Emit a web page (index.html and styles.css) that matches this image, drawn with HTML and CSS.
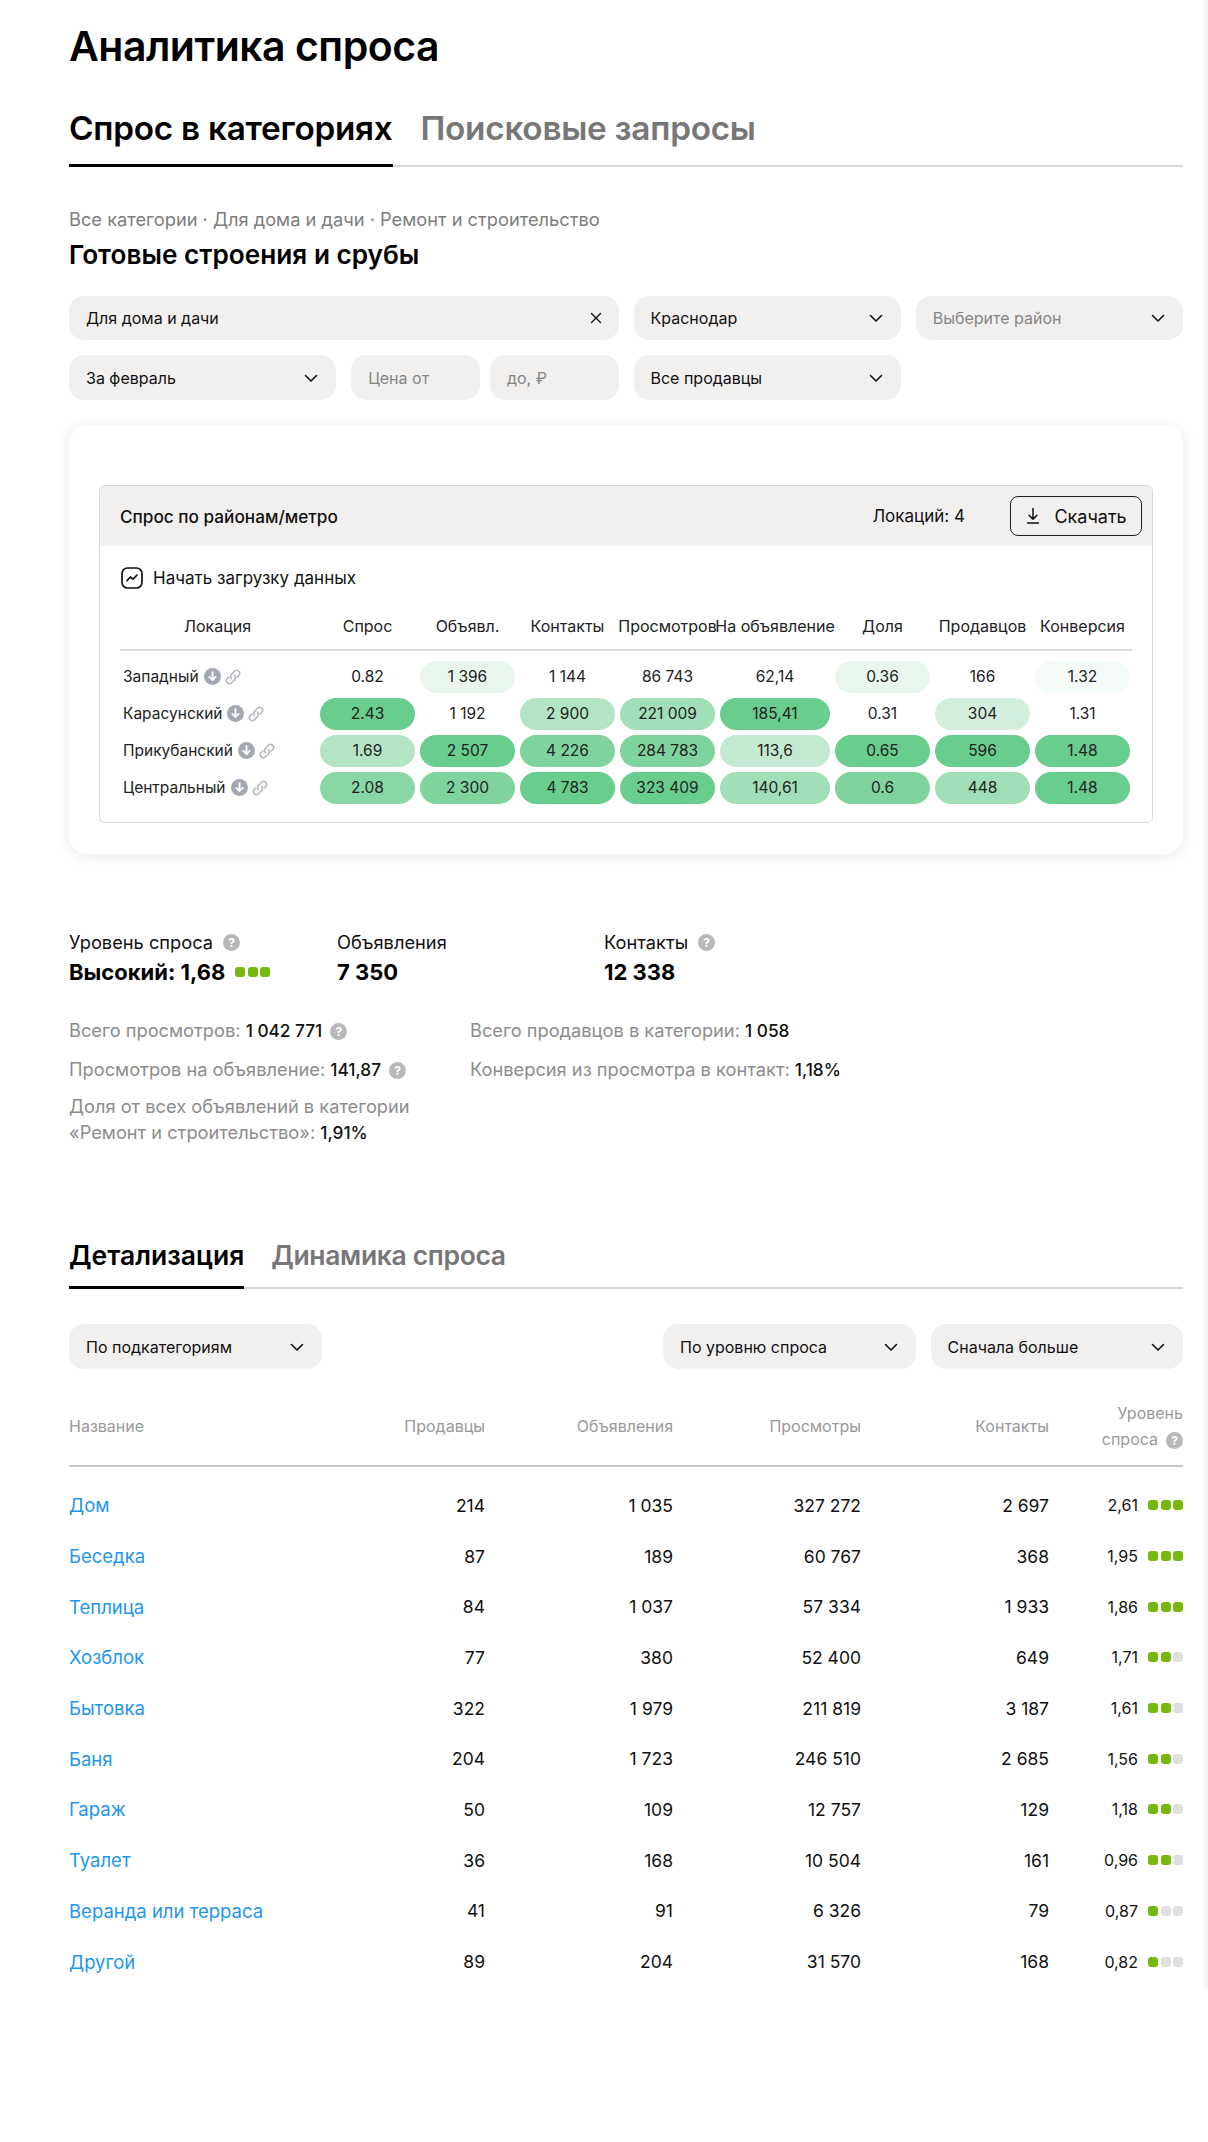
FILE: index.html
```html
<!DOCTYPE html>
<html lang="ru">
<head>
<meta charset="utf-8">
<title>Аналитика спроса</title>
<link rel="stylesheet" href="styles.css">
</head>
<body>
<svg class="defs" width="0" height="0" aria-hidden="true">
  <symbol id="chev" viewBox="0 0 16 16"><path d="M2.5 5.5 8 11l5.5-5.5" fill="none" stroke="currentColor" stroke-width="1.6" stroke-linecap="round" stroke-linejoin="round"/></symbol>
  <symbol id="down" viewBox="0 0 16 16"><circle cx="8" cy="8" r="8" fill="#a3a8b3"/><path d="M8 3.8v7.4M5 8.4l3 3 3-3" fill="none" stroke="#fff" stroke-width="1.7" stroke-linecap="round" stroke-linejoin="round"/></symbol>
  <symbol id="link" viewBox="1 1 14 14"><g fill="none" stroke="#b4b7be" stroke-width="1.4" stroke-linecap="round"><path d="M6.6 9.4a2.6 2.6 0 0 1 0-3.7l2.7-2.7a2.6 2.6 0 0 1 3.7 3.7l-1.3 1.3"/><path d="M9.4 6.6a2.6 2.6 0 0 1 0 3.7L6.7 13A2.6 2.6 0 0 1 3 9.3l1.3-1.3"/></g></symbol>
</svg>
<div class="page">
  <h1 class="title">Аналитика спроса</h1>
  <nav class="tabs tabs-main">
    <span class="tab tab-active">Спрос в категориях</span>
    <span class="tab">Поисковые запросы</span>
  </nav>
  <p class="crumbs">Все категории · Для дома и дачи · Ремонт и строительство</p>
  <h2 class="subtitle">Готовые строения и срубы</h2>

  <div class="filters">
    <div class="field span2"><span>Для дома и дачи</span>
      <svg class="ico-x" viewBox="0 0 12 12"><path d="M1.5 1.5l9 9M10.5 1.5l-9 9" fill="none" stroke="#111" stroke-width="1.4" stroke-linecap="round"/></svg></div>
    <div class="field"><span>Краснодар</span><svg class="chev"><use href="#chev"/></svg></div>
    <div class="field"><span class="muted">Выберите район</span><svg class="chev"><use href="#chev"/></svg></div>
    <div class="field tall"><span>За февраль</span><svg class="chev"><use href="#chev"/></svg></div>
    <div class="price-pair">
      <div class="field tall"><span class="muted">Цена от</span></div>
      <div class="field tall"><span class="muted">до, ₽</span></div>
    </div>
    <div class="field tall"><span>Все продавцы</span><svg class="chev"><use href="#chev"/></svg></div>
  </div>

  <section class="card">
    <div class="box">
      <header class="box-head">
        <span class="box-title">Спрос по районам/метро</span>
        <span class="box-count">Локаций: 4</span>
        <button class="download" type="button">
          <svg class="ico-dl" viewBox="0 0 16 18"><path d="M8 1.5v10.5M4.2 8.4 8 12.2l3.8-3.8M2.5 16h11" fill="none" stroke="#111" stroke-width="1.5" stroke-linecap="round" stroke-linejoin="round"/></svg>
          Скачать
        </button>
      </header>
      <div class="box-body">
        <div class="start">
          <svg class="ico-chart" viewBox="0 0 22 22"><rect x="1" y="1" width="20" height="20" rx="5.5" fill="none" stroke="#111" stroke-width="1.7"/><path d="M6 13.6 9.4 10l2.7 2.2L16 8" fill="none" stroke="#111" stroke-width="1.7" stroke-linecap="round" stroke-linejoin="round"/></svg>
          <span>Начать загрузку данных</span>
        </div>
        <div class="hm-row hm-head">
          <div class="hm-h">Локация</div><div class="hm-h">Спрос</div><div class="hm-h">Объявл.</div><div class="hm-h">Контакты</div><div class="hm-h">Просмотров</div><div class="hm-h">На объявление</div><div class="hm-h">Доля</div><div class="hm-h">Продавцов</div><div class="hm-h">Конверсия</div>
        </div>
        <div class="hm-row">
          <div class="hm-loc">Западный<svg class="ico-d"><use href="#down"/></svg><svg class="ico-l"><use href="#link"/></svg></div>
          <div class="pill">0.82</div><div class="pill h2">1 396</div><div class="pill">1 144</div><div class="pill">86 743</div><div class="pill">62,14</div><div class="pill h2">0.36</div><div class="pill">166</div><div class="pill h1">1.32</div>
        </div>
        <div class="hm-row">
          <div class="hm-loc">Карасунский<svg class="ico-d"><use href="#down"/></svg><svg class="ico-l"><use href="#link"/></svg></div>
          <div class="pill h9">2.43</div><div class="pill">1 192</div><div class="pill h5">2 900</div><div class="pill h6">221 009</div><div class="pill h9">185,41</div><div class="pill">0.31</div><div class="pill h3">304</div><div class="pill">1.31</div>
        </div>
        <div class="hm-row">
          <div class="hm-loc">Прикубанский<svg class="ico-d"><use href="#down"/></svg><svg class="ico-l"><use href="#link"/></svg></div>
          <div class="pill h5">1.69</div><div class="pill h9">2 507</div><div class="pill h8">4 226</div><div class="pill h8">284 783</div><div class="pill h4">113,6</div><div class="pill h9">0.65</div><div class="pill h9">596</div><div class="pill h9">1.48</div>
        </div>
        <div class="hm-row">
          <div class="hm-loc">Центральный<svg class="ico-d"><use href="#down"/></svg><svg class="ico-l"><use href="#link"/></svg></div>
          <div class="pill h7">2.08</div><div class="pill h8">2 300</div><div class="pill h9">4 783</div><div class="pill h9">323 409</div><div class="pill h6">140,61</div><div class="pill h8">0.6</div><div class="pill h6">448</div><div class="pill h9">1.48</div>
        </div>
      </div>
    </div>
  </section>

  <section class="stats">
    <div class="stat">
      <div class="stat-label">Уровень спроса<span class="help">?</span></div>
      <div class="stat-value">Высокий: 1,68<span class="dots"><i class="on"></i><i class="on"></i><i class="on"></i></span></div>
    </div>
    <div class="stat">
      <div class="stat-label">Объявления</div>
      <div class="stat-value">7 350</div>
    </div>
    <div class="stat">
      <div class="stat-label">Контакты<span class="help">?</span></div>
      <div class="stat-value">12 338</div>
    </div>
  </section>

  <section class="facts">
    <div class="facts-col">
      <p class="fact">Всего просмотров: <b>1 042 771</b><span class="help">?</span></p>
      <p class="fact">Просмотров на объявление: <b>141,87</b><span class="help">?</span></p>
      <p class="fact fact-wrap">Доля от всех объявлений в категории<br>«Ремонт и строительство»: <b>1,91%</b></p>
    </div>
    <div class="facts-col">
      <p class="fact">Всего продавцов в категории: <b>1 058</b></p>
      <p class="fact">Конверсия из просмотра в контакт: <b>1,18%</b></p>
    </div>
  </section>

  <nav class="tabs tabs-sub">
    <span class="tab tab-active">Детализация</span>
    <span class="tab tab-tight">Динамика спроса</span>
  </nav>

  <div class="filters2">
    <div class="field tall w1"><span>По подкатегориям</span><svg class="chev"><use href="#chev"/></svg></div>
    <div class="field tall w2"><span>По уровню спроса</span><svg class="chev"><use href="#chev"/></svg></div>
    <div class="field tall w2"><span>Сначала больше</span><svg class="chev"><use href="#chev"/></svg></div>
  </div>

  <div class="dt-row dt-head">
    <div class="name">Название</div><div>Продавцы</div><div>Объявления</div><div>Просмотры</div><div>Контакты</div>
    <div class="lvl-h">Уровень<br>спроса<span class="help">?</span></div>
  </div>
  <div class="dt-row"><a class="name" href="#">Дом</a><div>214</div><div>1 035</div><div>327 272</div><div>2 697</div><div class="lvl">2,61<span class="dots"><i class="on"></i><i class="on"></i><i class="on"></i></span></div></div>
  <div class="dt-row"><a class="name" href="#">Беседка</a><div>87</div><div>189</div><div>60 767</div><div>368</div><div class="lvl">1,95<span class="dots"><i class="on"></i><i class="on"></i><i class="on"></i></span></div></div>
  <div class="dt-row"><a class="name" href="#">Теплица</a><div>84</div><div>1 037</div><div>57 334</div><div>1 933</div><div class="lvl">1,86<span class="dots"><i class="on"></i><i class="on"></i><i class="on"></i></span></div></div>
  <div class="dt-row"><a class="name" href="#">Хозблок</a><div>77</div><div>380</div><div>52 400</div><div>649</div><div class="lvl">1,71<span class="dots"><i class="on"></i><i class="on"></i><i></i></span></div></div>
  <div class="dt-row"><a class="name" href="#">Бытовка</a><div>322</div><div>1 979</div><div>211 819</div><div>3 187</div><div class="lvl">1,61<span class="dots"><i class="on"></i><i class="on"></i><i></i></span></div></div>
  <div class="dt-row"><a class="name" href="#">Баня</a><div>204</div><div>1 723</div><div>246 510</div><div>2 685</div><div class="lvl">1,56<span class="dots"><i class="on"></i><i class="on"></i><i></i></span></div></div>
  <div class="dt-row"><a class="name" href="#">Гараж</a><div>50</div><div>109</div><div>12 757</div><div>129</div><div class="lvl">1,18<span class="dots"><i class="on"></i><i class="on"></i><i></i></span></div></div>
  <div class="dt-row"><a class="name" href="#">Туалет</a><div>36</div><div>168</div><div>10 504</div><div>161</div><div class="lvl">0,96<span class="dots"><i class="on"></i><i class="on"></i><i></i></span></div></div>
  <div class="dt-row"><a class="name" href="#">Веранда или терраса</a><div>41</div><div>91</div><div>6 326</div><div>79</div><div class="lvl">0,87<span class="dots"><i class="on"></i><i></i><i></i></span></div></div>
  <div class="dt-row"><a class="name" href="#">Другой</a><div>89</div><div>204</div><div>31 570</div><div>168</div><div class="lvl">0,82<span class="dots"><i class="on"></i><i></i><i></i></span></div></div>
</div>
</body>
</html>
```
FILE: styles.css
```css
* { box-sizing: border-box; }
html, body { margin: 0; background: #fff; }
body { font-family: Inter, "Noto Sans", sans-serif; color: #111; }
.defs { position: absolute; }
.page { position: relative; width: 1208px; height: 1989px; padding: 22px 25px 0 69px; }
.page::after { content: ""; position: absolute; top: 0; right: 0; bottom: 0; width: 6px; background: linear-gradient(90deg, #fff, #f4f4f4); }

.title { margin: 0; font-size: 41px; line-height: 48px; font-weight: 600; color: #000; letter-spacing: -0.5px; }
.tabs { display: flex; border-bottom: 2px solid #d8d8d8; }
.tab { font-weight: 600; color: #777; position: relative; }
.tab-active { color: #000; }
.tab-active::after { content: ""; position: absolute; left: 0; right: 0; bottom: -2px; height: 3px; background: #000; }
.tabs-main { margin-top: 30px; height: 67px; gap: 28px; font-size: 33.3px; line-height: 40px; }
.tabs-main .tab { padding-top: 8px; letter-spacing: -0.25px; }
.crumbs { margin: 40px 0 0; font-size: 18.25px; line-height: 24px; color: #7d7d7d; }
.subtitle { margin: 9px 0 0; font-size: 26.2px; line-height: 30px; font-weight: 600; color: #000; }

.filters { margin-top: 26px; display: grid; grid-template-columns: repeat(4, 1fr); gap: 15px; }
.span2 { grid-column: span 2; }
.price-pair { display: flex; gap: 10px; }
.price-pair .field { flex: 1; }
.field { height: 44px; border-radius: 15px; background: #f1f0ef; padding: 0 17px; display: flex; align-items: center; justify-content: space-between; font-size: 16px; color: #111; }
.tall { height: 45px; }
.muted { color: #858585; }
.chev { width: 16px; height: 16px; color: #111; flex: none; }
.ico-x { width: 12px; height: 12px; flex: none; }

.card { margin-top: 25px; height: 429px; border-radius: 18px; background: #fff; box-shadow: 0 2px 14px rgba(0,0,0,.09); padding: 60px 30px 0; }
.box { width: 1054px; height: 338px; border: 1px solid #d9d9d9; border-radius: 6px; overflow: hidden; }
.box-head { height: 60px; background: #f1f0ef; display: flex; align-items: center; padding: 0 10px 0 20px; font-size: 17.2px; }
.box-title { font-weight: 500; flex: 1; }
.box-count { margin-right: 45px; font-size: 17px; }
.download { width: 132px; height: 40px; border: 1px solid #222; border-radius: 8px; background: none; display: flex; align-items: center; justify-content: center; gap: 13px; font: 18px Inter, sans-serif; color: #111; padding: 0; }
.ico-dl { width: 16px; height: 18px; }
.box-body { padding: 21px 0 0 20px; }
.start { display: flex; align-items: center; gap: 10px; font-size: 17px; height: 22px; padding-left: 1px; }
.ico-chart { width: 22px; height: 22px; }
.hm-row { width: 1012px; display: grid; grid-template-columns: 195px repeat(4, 95px) 110px repeat(3, 95px); gap: 5px; height: 37px; align-items: center; }
.hm-head { margin-top: 16px; height: 46px; padding-bottom: 2px; border-bottom: 2px solid #dedede; margin-bottom: 7px; }
.hm-h { display: flex; justify-content: center; white-space: nowrap; font-size: 16px; color: #222; }
.hm-loc { display: flex; align-items: center; font-size: 15.5px; padding-left: 3px; color: #222; }
.pill { height: 32px; border-radius: 16px; display: flex; align-items: center; justify-content: center; font-size: 15.5px; color: #222; }
.ico-d { width: 17px; height: 17px; margin-left: 5px; }
.ico-l { width: 16px; height: 16px; margin-left: 4px; }
.h1 { background: #f5fbf7; }
.h2 { background: #e8f6ee; }
.h3 { background: #d3eedd; }
.h4 { background: #c3ead1; }
.h5 { background: #b3e5c4; }
.h6 { background: #a0dfb7; }
.h7 { background: #88d8a5; }
.h8 { background: #7fd49e; }
.h9 { background: #69cd8e; }

.stats { margin-top: 76px; display: grid; grid-template-columns: 268px 267px 267px; }
.stat-label { font-size: 18.25px; line-height: 24px; color: #111; display: flex; align-items: center; }
.stat-value { margin-top: 4px; font-size: 22px; line-height: 28px; font-weight: 700; color: #000; display: flex; align-items: center; }
.help { display: inline-block; width: 17px; height: 17px; border-radius: 50%; background: #b8b8b8; color: #fff; font-size: 12px; line-height: 17px; font-weight: 700; text-align: center; margin-left: 10px; flex: none; }
.dots { display: inline-flex; gap: 2.5px; margin-left: 10px; }
.dots i { width: 10px; height: 10px; border-radius: 3px; background: #e0e0e0; display: block; }
.dots .on { background: #76b80f; }

.facts { margin-top: 32px; display: grid; grid-template-columns: 401px auto; }
.fact { margin: 0 0 14px; font-size: 18.25px; line-height: 24px; color: #8c8c8c; }
.fact b { font-weight: 500; color: #111; font-size: 17.25px; }
.fact .help { vertical-align: 1px; margin-left: 8px; }
.fact-wrap { line-height: 26px; margin-top: -3px; }

.tabs-sub { margin-top: 68px; height: 61px; gap: 27px; font-size: 26.5px; line-height: 34px; }
.tabs-sub .tab { padding-top: 10px; }
.tabs-sub .tab-tight { letter-spacing: -0.35px; }
.filters2 { margin-top: 35px; display: flex; gap: 15px; }
.filters2 .w1 { width: 253px; margin-right: auto; }
.filters2 .w2 { width: 252.5px; }

.dt-row { display: grid; grid-template-columns: 228px repeat(4, 188px) 134px; align-items: center; height: 50.7px; font-size: 17.5px; text-align: right; color: #111; }
.dt-head { margin-top: 31px; height: 67px; margin-bottom: 13px; border-bottom: 2px solid #c9c9c9; font-size: 16px; color: #999; padding-bottom: 16px; }
.name { text-align: left; }
a.name { color: #1d96f0; text-decoration: none; font-size: 18.5px; }
.lvl { font-size: 16px; display: flex; align-items: center; justify-content: flex-end; }
.lvl-h { line-height: 26px; }
.lvl-h .help { vertical-align: 0; margin-left: 8px; }
```
